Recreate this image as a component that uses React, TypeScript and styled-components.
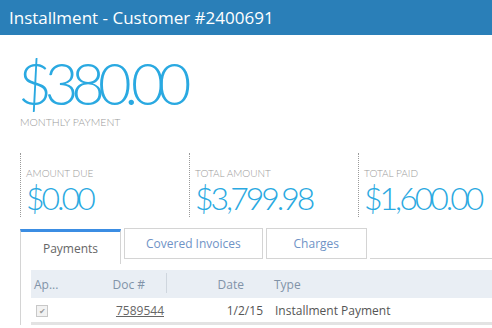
import React from "react";
import styled, { createGlobalStyle } from "styled-components";

const GlobalStyle = createGlobalStyle`
  body {
    margin: 0;
    background: #ffffff;
    font-family: "Open Sans", "Liberation Sans", sans-serif;
  }
`;

const stats = [
  { label: "AMOUNT DUE", value: "$0.00" },
  { label: "TOTAL AMOUNT", value: "$3,799.98" },
  { label: "TOTAL PAID", value: "$1,600.00" },
];

const tabs = ["Payments", "Covered Invoices", "Charges"];

const App = () => {
  return (
    <Page>
      <GlobalStyle />
      <Header>Installment - Customer #2400691</Header>
      <Hero>
        <BigAmount>$380.00</BigAmount>
        <HeroLabel>MONTHLY PAYMENT</HeroLabel>
      </Hero>
      <StatRow>
        {stats.map((s) => (
          <Stat key={s.label}>
            <StatLabel>{s.label}</StatLabel>
            <StatValue>{s.value}</StatValue>
          </Stat>
        ))}
      </StatRow>
      <TabBar>
        {tabs.map((t, i) => (
          <Tab key={t} active={i === 0}>{t}</Tab>
        ))}
        <TabFill />
      </TabBar>
      <Panel>
        <Table>
          <thead>
            <tr>
              <Th width={36}>Ap...</Th>
              <Th width={99} align="right">Doc #</Th>
              <Th width={99} align="right">Date</Th>
              <Th wide>Type</Th>
            </tr>
          </thead>
          <tbody>
            <tr>
              <Td><Check>✔</Check></Td>
              <Td align="right"><DocLink>7589544</DocLink></Td>
              <Td align="right">1/2/15</Td>
              <Td wide>Installment Payment</Td>
            </tr>
          </tbody>
        </Table>
      </Panel>
    </Page>
  );
};

const Page = styled.div`
  width: 492px;
  height: 328px;
  overflow: hidden;
`;

const Header = styled.div`
  height: 35px;
  background: #2a7fb8;
  color: #ffffff;
  font-size: 17px;
  line-height: 36px;
  padding-left: 9px;
`;

const Hero = styled.div`
  padding: 18px 0 0 18px;
  height: 100px;
  box-sizing: border-box;
`;

const BigAmount = styled.div`
  font-family: Lato, "Open Sans", sans-serif;
  font-weight: 300;
  font-size: 58px;
  line-height: 60px;
  letter-spacing: -7px;
  color: #2aa9e1;
`;

const HeroLabel = styled.div`
  font-family: Lato, "Open Sans", sans-serif;
  font-weight: 300;
  font-size: 10.5px;
  color: #9a9a9a;
  margin: 3px 0 0 2px;
`;

const StatRow = styled.div`
  display: flex;
  padding-left: 20px;
  margin-top: 18px;
`;

const Stat = styled.div`
  width: 169px;
  flex-shrink: 0;
  height: 64px;
  box-sizing: border-box;
  border-left: 1px dotted #9a9a9a;
  padding: 14px 0 0 5px;
`;

const StatLabel = styled.div`
  font-family: Lato, "Open Sans", sans-serif;
  font-weight: 300;
  font-size: 10px;
  color: #9a9a9a;
  line-height: 12px;
  margin-bottom: 5px;
`;

const StatValue = styled.div`
  font-family: Lato, "Open Sans", sans-serif;
  font-weight: 300;
  font-size: 32px;
  line-height: 28px;
  letter-spacing: -3px;
  color: #2aa9e1;
`;

const TabBar = styled.div`
  display: flex;
  align-items: flex-end;
  padding-left: 20px;
  margin-top: 11px;
  gap: 3px;
`;

const Tab = styled.div<{ active?: boolean }>`
  box-sizing: border-box;
  padding: 0 21px;
  min-width: 101px;
  text-align: center;
  font-size: 12px;
  height: ${(p) => (p.active ? "35px" : "31px")};
  line-height: ${(p) => (p.active ? "34px" : "29px")};
  color: ${(p) => (p.active ? "#666666" : "#6f93c6")};
  background: #ffffff;
  border: 1px solid #d4d4d4;
  border-top: ${(p) => (p.active ? "3px solid #3b8de3" : "1px solid #d4d4d4")};
  border-bottom: ${(p) => (p.active ? "none" : "1px solid #d4d4d4")};
  margin-bottom: ${(p) => (p.active ? "-5px" : "0")};
`;

const TabFill = styled.div`
  flex: 1;
  border-bottom: 1px solid #d4d4d4;
`;

const Panel = styled.div`
  margin-left: 20px;
  border-left: 1px solid #d4d4d4;
  padding: 11px 0 0 10px;
`;

const Table = styled.table`
  width: 100%;
  border-collapse: collapse;
  table-layout: fixed;
  font-size: 12px;
`;

const Th = styled.th<{ width?: number; align?: string; wide?: boolean }>`
  box-sizing: border-box;
  width: ${(p) => (p.width ? `${p.width}px` : "auto")};
  text-align: ${(p) => p.align || "left"};
  font-weight: 400;
  color: #8193a8;
  background: #e9eef4;
  height: 28px;
  padding: 0 ${(p) => (p.align === "right" ? "21px" : "4px")} 0
    ${(p) => (p.wide ? "9px" : "3px")};
  position: relative;
  white-space: nowrap;
  overflow: hidden;
  & + &::before {
    content: "";
    position: absolute;
    left: 0;
    top: 3px;
    bottom: 5px;
    border-left: 1px solid #cfd6de;
  }
`;

const Td = styled.td<{ align?: string; wide?: boolean }>`
  text-align: ${(p) => p.align || "left"};
  color: #555555;
  height: 24px;
  padding: 0 2px 0 ${(p) => (p.wide ? "10px" : "4px")};
  border-bottom: 3px solid #e3e3e3;
  white-space: nowrap;
`;

const Check = styled.span`
  display: inline-block;
  width: 10px;
  height: 10px;
  border: 1px solid #c8c8c8;
  background: #f2f2f2;
  color: #9a9a9a;
  font-size: 8px;
  line-height: 10px;
  text-align: center;
  margin-left: 1px;
  vertical-align: middle;
`;

const DocLink = styled.a`
  color: #666666;
  text-decoration: underline;
  cursor: pointer;
`;

export default App;
